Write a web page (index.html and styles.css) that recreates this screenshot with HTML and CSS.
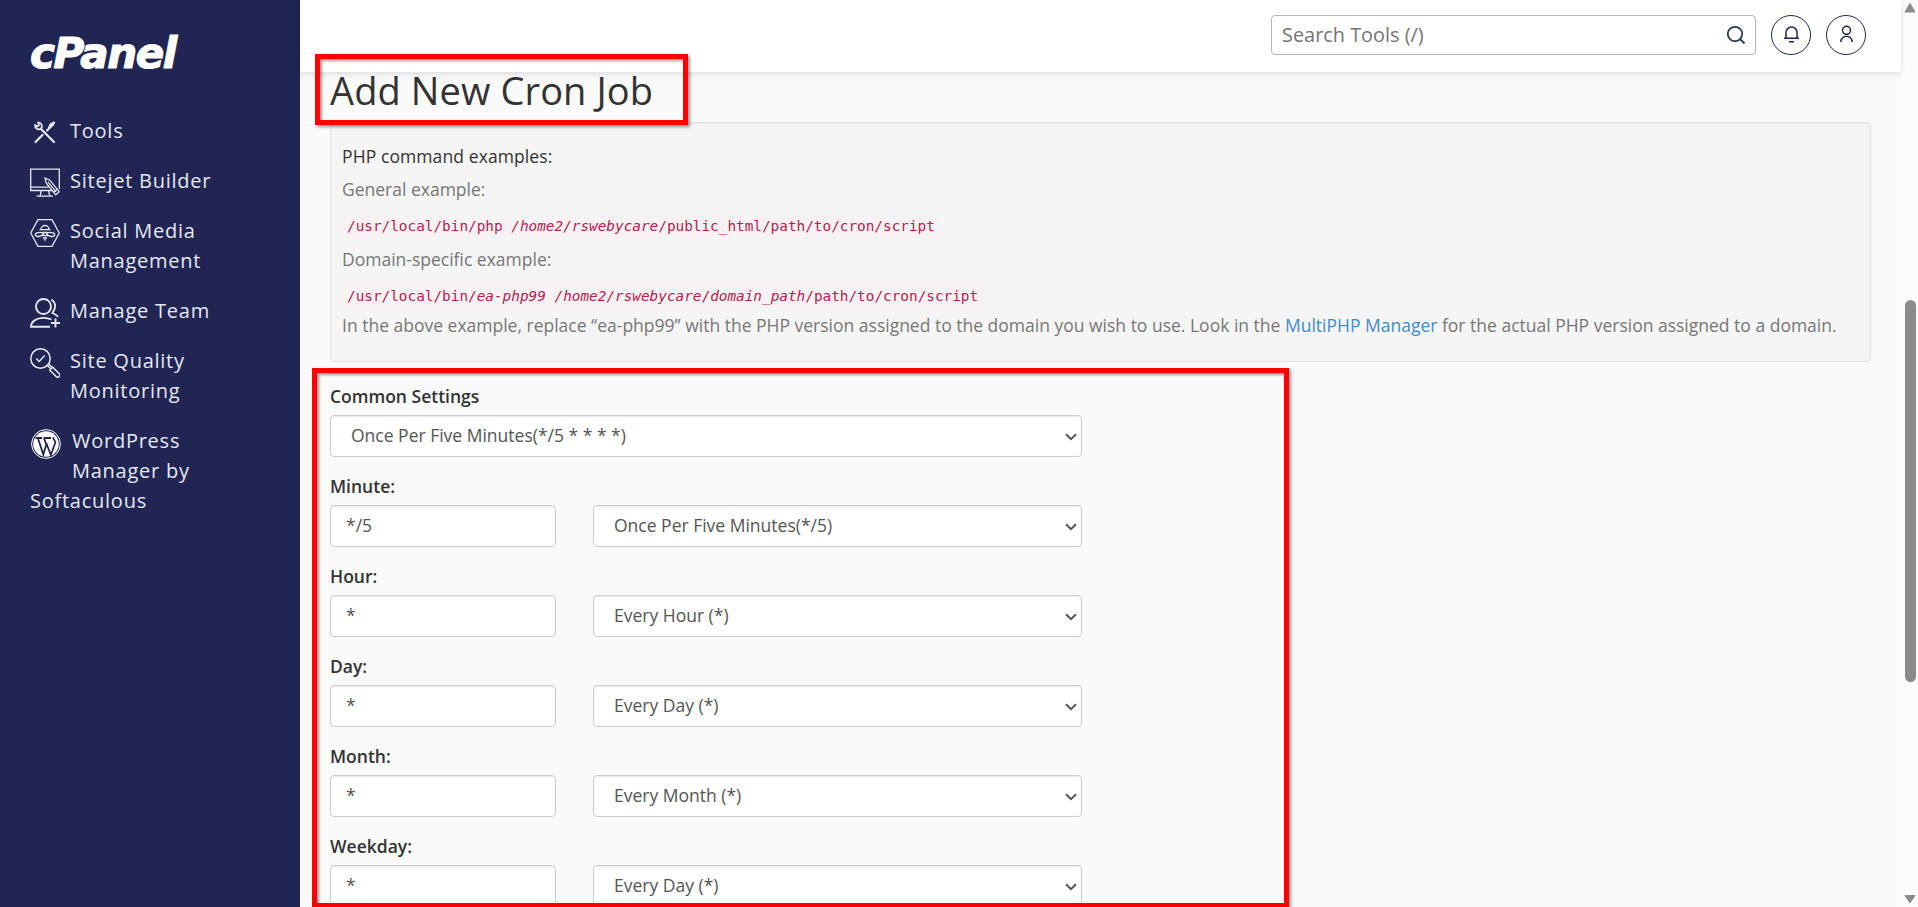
FILE: index.html
```html
<!DOCTYPE html>
<html lang="en">
<head>
  <title>cPanel - Cron Jobs</title>
  <meta charset="UTF-8" />
  <link rel="stylesheet" href="styles.css">
</head>
<body>
  <div class="app">
    <!-- Sidebar -->
    <nav class="sidebar">
      <div class="logo">cPanel</div>
      <ul class="nav-list">
        <li class="nav-item">
          <svg viewBox="0 0 30 30" fill="none" stroke="#e6e8f2" stroke-width="2.200" stroke-linecap="round">
            <path d="M11 11L24 24M5.500 24l7-7M17 12.500l3-3" />
            <path d="M8 4.300a3.800 3.800 0 0 1 3 6.200a3.800 3.800 0 0 1-6-3.500M5 7l2.500 1.500l1.500-1.500l-1-2.700" stroke-width="1.700" />
            <path d="M18.500 9.500l1.500-3.500l4-2.300l.8.800l-2.300 4l-3.500 1.800z" fill="#e6e8f2" stroke-width="1" />
          </svg>
          <span>Tools</span>
        </li>
        <li class="nav-item">
          <svg viewBox="0 0 30 30" fill="none" stroke="#e6e8f2" stroke-width="1.300">
            <path d="M22 22.500H.7V1.200h28.600V21M.7 19.200h18M11.500 22.500l-1.500 5.500M18.500 22.500l1.300 5.500M6.500 28.200h16.500" />
            <path d="M15 10l4.800 2.200l9.500 11.600l-3.700 3l-9.300-11.600zM27.300 21.300l-3.700 3M18 13.800l8 10" />
          </svg>
          <span>Sitejet Builder</span>
        </li>
        <li class="nav-item">
          <svg viewBox="0 0 30 30" fill="none" stroke="#e6e8f2" stroke-width="1.300">
            <path d="M8 1.700h14L29.300 15L22 28.300H8L.7 15z" />
            <path d="M11 11.500a4 4 0 0 1 8 0M9.500 11.700h11M12.500 14.500h5M13 20h4M14 21.800h2" />
            <path d="M13.500 15.200c-3-1.200-8-1-8.200 1.200c0 3 6.500 3 8.200-1.200zM16.500 15.200c3-1.200 8-1 8.200 1.200c0 3-6.500 3-8.200-1.200zM12 17.500h6" />
          </svg>
          <span>Social Media Management</span>
        </li>
        <li class="nav-item">
          <svg viewBox="0 0 30 30" fill="none" stroke="#e6e8f2" stroke-width="1.900">
            <circle cx="13.500" cy="8.500" r="7.500" />
            <path d="M21.500 1.500c4.500 3.500 4.500 8.500 1 13.500c2.300 1 3.700 1.800 5.500 3.700M21.500 21.500c-5-2.300-13-2.300-17.500 1.200c-2 1.600-3 3.500-3 6h19M25.500 20.500v9M21 25h9" />
          </svg>
          <span>Manage Team</span>
        </li>
        <li class="nav-item">
          <svg viewBox="0 0 30 30" fill="none" stroke="#e6e8f2" stroke-width="1.500">
            <circle cx="10.500" cy="10.500" r="9.700" />
            <path d="M6.200 10.500l3 3l5.500-6M17.500 17.500l3 3M19 16.300l2.700 2.700" />
            <path d="M19.800 22.200l6.300 6.300a2 2 0 0 0 3-3l-6.500-6.400z" />
          </svg>
          <span>Site Quality Monitoring</span>
        </li>
        <li class="nav-item nav-item-wide">
          <svg viewBox="0 0 30 30">
            <circle cx="15" cy="15" r="14.400" fill="none" stroke="#fff" />
            <circle cx="15" cy="15" r="12.800" fill="#fff" />
            <path d="M4.500 9h6.500M12.500 9h7.500M7 9.500l5.300 16l3-10l-2.200-6M15.500 14.500l4.300 11.500l4.400-12c.7-2.200-2-3.500-2-5.700" fill="none" stroke="#202553" stroke-width="1.800" />
          </svg>
          <span>WordPress Manager by</span>
          <span class="nav-rest">Softaculous</span>
        </li>
      </ul>
    </nav>

    <div class="page">
      <!-- Top bar -->
      <header class="topbar">
        <div class="search">
          <input type="text" placeholder="Search Tools (/)" />
          <svg width="20" height="20" viewBox="0 0 20 20" fill="none" stroke="#293a4a" stroke-width="1.800">
            <circle cx="9" cy="9" r="7.200" />
            <path d="M14 14l4.500 4.500" />
          </svg>
        </div>
        <button class="round-btn">
          <svg width="20" height="20" viewBox="0 0 20 20" fill="none" stroke="#202553" stroke-width="1.500">
            <path d="M3 13.300h15M5 13.300V7.500a5.500 5.500 0 0 1 11 0v5.800M8 16.700h5" />
          </svg>
        </button>
        <button class="round-btn">
          <svg width="20" height="20" viewBox="0 0 20 20" fill="none" stroke="#202553" stroke-width="1.500">
            <circle cx="10.500" cy="5.300" r="4" />
            <path d="M4.800 17a5.700 5.700 0 0 1 11.400 0" />
          </svg>
        </button>
      </header>

      <main class="content">
        <h2>Add New Cron Job</h2>

        <div class="well">
          <p class="well-title">PHP command examples:</p>
          <p>General example:</p>
          <p class="code-line"><code>/usr/local/bin/php <em>/home2/rswebycare</em>/public_html/path/to/cron/script</code></p>
          <p>Domain-specific example:</p>
          <p class="code-line"><code>/usr/local/bin/<em>ea-php99</em> <em>/home2/rswebycare</em>/<em>domain_path</em>/path/to/cron/script</code></p>
          <p class="note">In the above example, replace “ea-php99” with the PHP version assigned to the domain you wish to use. Look in the <a href="#">MultiPHP Manager</a> for the actual PHP version assigned to a domain.</p>
        </div>

        <!-- Cron form -->
        <form class="cron-form">
          <div class="form-group">
            <label for="common">Common Settings</label>
            <div class="row">
              <div class="select">
                <select id="common"><option>Once Per Five Minutes(*/5 * * * *)</option></select>
                <svg viewBox="0 0 12 8"><path d="M1 1.200l5 5l5-5" /></svg>
              </div>
            </div>
          </div>
          <div class="form-group">
            <label for="minute">Minute:</label>
            <div class="row">
              <input type="text" id="minute" value="*/5" />
              <div class="select">
                <select><option>Once Per Five Minutes(*/5)</option></select>
                <svg viewBox="0 0 12 8"><path d="M1 1.200l5 5l5-5" /></svg>
              </div>
            </div>
          </div>
          <div class="form-group">
            <label for="hour">Hour:</label>
            <div class="row">
              <input type="text" id="hour" value="*" />
              <div class="select">
                <select><option>Every Hour (*)</option></select>
                <svg viewBox="0 0 12 8"><path d="M1 1.200l5 5l5-5" /></svg>
              </div>
            </div>
          </div>
          <div class="form-group">
            <label for="day">Day:</label>
            <div class="row">
              <input type="text" id="day" value="*" />
              <div class="select">
                <select><option>Every Day (*)</option></select>
                <svg viewBox="0 0 12 8"><path d="M1 1.200l5 5l5-5" /></svg>
              </div>
            </div>
          </div>
          <div class="form-group">
            <label for="month">Month:</label>
            <div class="row">
              <input type="text" id="month" value="*" />
              <div class="select">
                <select><option>Every Month (*)</option></select>
                <svg viewBox="0 0 12 8"><path d="M1 1.200l5 5l5-5" /></svg>
              </div>
            </div>
          </div>
          <div class="form-group">
            <label for="weekday">Weekday:</label>
            <div class="row">
              <input type="text" id="weekday" value="*" />
              <div class="select">
                <select><option>Every Day (*)</option></select>
                <svg viewBox="0 0 12 8"><path d="M1 1.200l5 5l5-5" /></svg>
              </div>
            </div>
          </div>
        </form>
      </main>
    </div>

    <!-- Scrollbar -->
    <div class="scrollbar">
      <svg width="14" height="12" viewBox="0 0 14 12"><path d="M7 1.500L12 10H2z" /></svg>
      <div class="thumb"></div>
      <svg width="14" height="12" viewBox="0 0 14 12"><path d="M7 10L2 2.500h10z" /></svg>
    </div>

    <!-- Highlights -->
    <div class="mark mark-title"></div>
    <div class="mark mark-form"></div>
  </div>
</body>
</html>
```
FILE: styles.css
```css
* {
  box-sizing: border-box;
}

body {
  margin: 0;
  font-family: "Open Sans", sans-serif;
  font-size: 17.5px;
  color: #333;
  background: #fafafa;
}

.app {
  position: relative;
  display: flex;
  height: 907px;
  overflow: hidden;
}

/* Sidebar */
.sidebar {
  width: 300px;
  flex: none;
  background: #202553;
  color: #e6e8f2;
  padding: 29px 30px;
}

.logo {
  font-family: "DejaVu Sans", sans-serif;
  font-size: 42px;
  font-weight: bold;
  font-style: italic;
  line-height: 50px;
  letter-spacing: -1.4px;
  color: #fff;
  -webkit-text-stroke: 1.2px #fff;
}

.nav-list {
  list-style: none;
  margin: 37px 0 0;
  padding: 0;
}

.nav-item {
  display: grid;
  grid-template-columns: 30px 145px;
  column-gap: 10px;
  margin-bottom: 20px;
  font-size: 20px;
  line-height: 30px;
  letter-spacing: 0.75px;
}

.nav-item svg {
  width: 30px;
  height: 30px;
  margin: 2px 0 -2px;
}

.nav-item-wide {
  grid-template-columns: 32px 145px;
}

.nav-item-wide svg {
  margin: 3px 0 -3px 1px;
}

.nav-rest {
  grid-column: 1 / 3;
}

/* Top bar */
.page {
  flex: 1;
  min-width: 0;
}

.topbar {
  position: relative;
  display: flex;
  justify-content: flex-end;
  align-items: flex-start;
  gap: 15px;
  height: 72px;
  padding: 15px 35px 0 0;
  background: #fff;
  box-shadow: 0 2px 6px rgba(0, 0, 0, 0.12);
}

.search {
  display: flex;
  align-items: center;
  width: 485px;
  height: 40px;
  padding: 0 9px 0 10px;
  border: 1px solid #b5b7c0;
  border-radius: 4px;
}

.search input {
  flex: 1;
  padding: 0 0 2px;
  border: 0;
  outline: none;
  font-family: inherit;
  font-size: 19.9px;
}

.search input::placeholder {
  color: #757575;
}

.round-btn {
  display: flex;
  align-items: center;
  justify-content: center;
  width: 40px;
  height: 40px;
  padding: 0;
  background: #fff;
  border: 1px solid #202553;
  border-radius: 50%;
}

/* Content */
.content {
  padding: 0 30px;
}

h2 {
  margin: 0 0 14px;
  font-size: 38px;
  font-weight: 400;
  line-height: 36px;
  letter-spacing: 0.1px;
}

.well {
  height: 240px;
  padding: 21px 11px;
  background: #f5f5f5;
  border: 1px solid #e3e3e3;
  border-radius: 4px;
  box-shadow: inset 0 1px 1px rgba(0, 0, 0, 0.05);
  color: #777;
}

.well p {
  margin: 0 0 8px;
  line-height: 25px;
}

.well .well-title {
  color: #333;
  font-weight: 500;
  letter-spacing: 0.1px;
}

.well .code-line {
  margin: 10px 0 8px;
}

.well .note {
  margin-top: -4px;
  white-space: nowrap;
}

.well a {
  color: #428bca;
  text-decoration: none;
}

code {
  padding: 3px 5px;
  font-family: "DejaVu Sans Mono", monospace;
  font-size: 14.37px;
  color: #b2224f;
  background: #f9f2f4;
  border-radius: 4px;
}

/* Cron form */
.cron-form {
  width: 752px;
  margin-top: 22px;
}

.form-group {
  margin-bottom: 17px;
}

label {
  display: block;
  line-height: 25px;
  margin-bottom: 6px;
  font-weight: 600;
}

.row {
  display: flex;
  gap: 37px;
}

.row input,
.select select {
  height: 42px;
  border: 1px solid #ccc;
  border-radius: 4px;
  background: #fff;
  box-shadow: inset 0 1px 1px rgba(0, 0, 0, 0.075);
  font-family: inherit;
  font-size: 17.5px;
  color: #555;
}

.row input {
  width: 226px;
  padding: 0 15px 2px;
}

.select {
  position: relative;
  flex: 1;
}

.select select {
  width: 100%;
  padding: 0 20px 2px;
  appearance: none;
}

.select svg {
  position: absolute;
  right: 5px;
  top: 18px;
  width: 12px;
  height: 8px;
  fill: none;
  stroke: #555;
  stroke-width: 2;
}

/* Scrollbar */
.scrollbar {
  display: flex;
  flex-direction: column;
  align-items: center;
  width: 17px;
  padding: 2px 0 2px 1px;
  background: #fcfcfc;
}

.scrollbar svg {
  fill: #8b8b8b;
  stroke: #8b8b8b;
  stroke-linejoin: round;
}

.thumb {
  width: 11px;
  height: 382px;
  margin: 286px 0 auto;
  border-radius: 6px;
  background: #8b8b8b;
}

/* Highlights */
.mark {
  position: absolute;
  border: 5px solid #f00;
  box-shadow: 2px 2px 3px rgba(0, 0, 0, 0.4), inset 2px 2px 3px rgba(0, 0, 0, 0.4);
}

.mark-title {
  left: 315px;
  top: 54px;
  width: 373px;
  height: 71px;
}

.mark-form {
  left: 312px;
  top: 368px;
  width: 977px;
  height: 540px;
}
```
